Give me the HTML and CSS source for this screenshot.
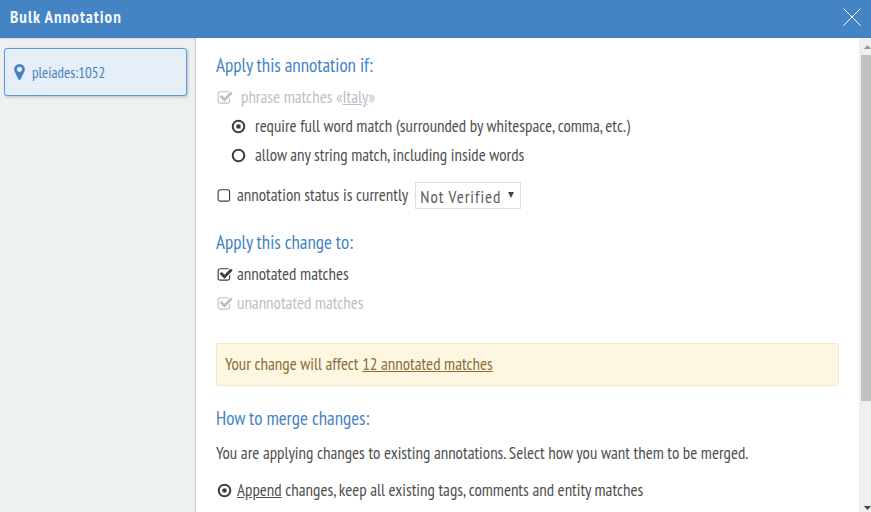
FILE: index.html
```html
<!DOCTYPE html>
<html lang="en">
<head>
<meta charset="utf-8">
<title>Bulk Annotation</title>
<link rel="stylesheet" href="styles.css">
</head>
<body>
<svg class="sprite" aria-hidden="true">
  <symbol id="checked" viewBox="0 0 1792 1792"><path d="M1472 930v318q0 119-84.5 203.5t-203.5 84.5h-832q-119 0-203.5-84.5t-84.5-203.5v-832q0-119 84.5-203.5t203.5-84.5h832q63 0 117 25 15 7 18 23 3 17-9 29l-49 49q-10 10-23 10-3 0-9-2-23-6-45-6h-832q-66 0-113 47t-47 113v832q0 66 47 113t113 47h832q66 0 113-47t47-113v-254q0-13 9-22l64-64q10-10 23-10 6 0 12 3 20 8 20 29zm231-489l-814 814q-24 24-57 24t-57-24l-430-430q-24-24-24-57t24-57l110-110q24-24 57-24t57 24l263 263 647-647q24-24 57-24t57 24l110 110q24 24 24 57t-24 57z"/></symbol>
  <symbol id="unchecked" viewBox="128 0 1792 1792"><path d="M1312 256h-832q-66 0-113 47t-47 113v832q0 66 47 113t113 47h832q66 0 113-47t47-113v-832q0-66-47-113t-113-47zm288 160v832q0 119-84.5 203.5t-203.5 84.5h-832q-119 0-203.5-84.5t-84.5-203.5v-832q0-119 84.5-203.5t203.5-84.5h832q119 0 203.5 84.5t84.5 203.5z"/></symbol>
  <symbol id="radio-off" viewBox="0 0 16 16"><circle cx="7.5" cy="7.5" r="5.8" fill="none" stroke="currentColor" stroke-width="2"/></symbol>
  <symbol id="radio-on" viewBox="0 0 16 16"><circle cx="7.5" cy="7.5" r="5.8" fill="none" stroke="currentColor" stroke-width="2"/><circle cx="7.5" cy="7.5" r="2.3"/></symbol>
</svg>

<div class="modal">
  <header class="titlebar">
    <h1>Bulk Annotation</h1>
    <button class="close" type="button" aria-label="Close">
      <svg viewBox="0 0 18 18"><path d="M.5.5l17 17M17.5.5l-17 17"/></svg>
    </button>
  </header>

  <aside class="sidebar">
    <div class="entity">
      <svg class="pin" viewBox="384 128 1024 1536" aria-hidden="true"><path d="M1152 640q0-106-75-181t-181-75-181 75-75 181 75 181 181 75 181-75 75-181zm256 0q0 109-33 179l-364 774q-16 33-47.5 52t-67.5 19-67.5-19-46.5-52l-365-774q-33-70-33-179 0-212 150-362t362-150 362 150 150 362z"/></svg>
      <span>pleiades:1052</span>
    </div>
  </aside>

  <main class="content">
    <section>
      <h2>Apply this annotation if:</h2>
      <label class="option disabled spaced"><span class="mark"><input type="checkbox" checked disabled><svg><use href="#checked"/></svg></span><span>phrase matches «<u>Italy</u>»</span></label>
      <div class="nested">
        <label class="option spaced"><span class="mark"><input type="radio" name="match" checked><svg><use href="#radio-on"/></svg></span><span>require full word match (surrounded by whitespace, comma, etc.)</span></label>
        <label class="option spaced"><span class="mark"><input type="radio" name="match"><svg><use href="#radio-off"/></svg></span><span>allow any string match, including inside words</span></label>
      </div>
      <div class="status">
        <label class="option"><span class="mark"><input type="checkbox"><svg><use href="#unchecked"/></svg></span><span>annotation status is currently</span></label>
        <span class="picker">
          <select aria-label="Annotation status"><option>Not Verified</option></select>
          <svg viewBox="0 0 6 6" aria-hidden="true"><path d="M0 0h6L3 6z"/></svg>
        </span>
      </div>
    </section>

    <section>
      <h2>Apply this change to:</h2>
      <label class="option"><span class="mark"><input type="checkbox" checked><svg><use href="#checked"/></svg></span><span>annotated matches</span></label>
      <label class="option disabled"><span class="mark"><input type="checkbox" checked disabled><svg><use href="#checked"/></svg></span><span>unannotated matches</span></label>
    </section>

    <p class="notice">Your change will affect <u>12 annotated matches</u></p>

    <section>
      <h2>How to merge changes:</h2>
      <p class="hint">You are applying changes to existing annotations. Select how you want them to be merged.</p>
      <label class="option"><span class="mark"><input type="radio" name="merge" checked><svg><use href="#radio-on"/></svg></span><span><u>Append</u> changes, keep all existing tags, comments and entity matches</span></label>
    </section>
  </main>

  <div class="scrollbar" aria-hidden="true">
    <svg class="arrow up" viewBox="0 0 9 5"><path d="M0 5L4.500 0 9 5z"/></svg>
    <div class="track"><div class="thumb"></div></div>
    <svg class="arrow down" viewBox="0 0 9 5"><path d="M0 0h9L4.500 5z"/></svg>
  </div>
</div>
</body>
</html>
```
FILE: styles.css
```css
* { box-sizing: border-box; }

body {
  margin: 0;
  color: #505050;
  background: #fff;
  font: 17px/29px "PT Sans Narrow", "Liberation Sans Narrow", "Roboto Condensed", sans-serif;
}

h1, h2, p { margin: 0; font-weight: normal; }

.sprite { display: none; }

.modal {
  display: grid;
  grid-template: auto minmax(0, 1fr) / 196px minmax(0, 1fr) 12px;
  height: 100vh;
  overflow: hidden;
}

.titlebar {
  grid-column: 1 / -1;
  display: flex;
  align-items: center;
  justify-content: space-between;
  height: 38px;
  padding: 0 10px;
  padding-bottom: 4px;
  color: #f4f8fc;
  background: #4483c4;
}

.titlebar h1 {
  font-size: 17px;
  font-weight: bold;
  letter-spacing: 1px;
}

.close {
  display: flex;
  padding: 0;
  border: 0;
  background: none;
}

.close svg {
  width: 18px;
  height: 18px;
  fill: none;
  stroke: #fff;
}

.sidebar {
  padding: 10px 9px 10px 4px;
  background: #edf1f2;
  box-shadow: inset -2px 0 2px -1px #c4c8ca, inset 0 2px 2px -1px #d4d8da;
}

.entity {
  display: flex;
  align-items: center;
  gap: 7px;
  height: 48px;
  padding: 0 9px;
  color: #4483c4;
  background: #e6eef7;
  border: 1px solid #5f9cdb;
  border-radius: 3px;
  box-shadow: 1px 1px 3px #bbb;
  font-size: 15px;
}

.pin {
  width: 11px;
  height: 16px;
  fill: currentColor;
}

.content {
  padding: 13px 20px 0;
  overflow: hidden;
  white-space: nowrap;
}

h2 {
  margin-bottom: 3px;
  color: #4483c4;
  font-size: 19px;
}

section + section { margin-top: 18px; }

.option {
  display: flex;
  align-items: center;
  gap: 4px;
}

.spaced { gap: 8px; }
.nested { padding-left: 14px; }

.disabled { color: #bbbfca; }

.mark {
  position: relative;
  display: flex;
  width: 17px;
  height: 16px;
  padding-left: 1px;
}

.mark input {
  position: absolute;
  inset: 0;
  width: 100%;
  height: 100%;
  margin: 0;
  opacity: 0;
}

.mark svg {
  width: 16px;
  height: 16px;
  flex: none;
  fill: currentColor;
}

.option:not(.disabled) .mark { color: #3c3c3c; }

.status {
  display: flex;
  align-items: center;
  gap: 7px;
  margin-top: 11px;
}

.picker {
  position: relative;
  display: flex;
}

.picker select {
  width: 106px;
  height: 27px;
  padding: 0 4px 3px;
  color: #5c5c5c;
  background: #fff;
  border: 1px solid #ddd;
  border-radius: 0;
  appearance: none;
  font: inherit;
  letter-spacing: 1px;
}

.picker svg {
  position: absolute;
  right: 7px;
  top: 10px;
  width: 6px;
  height: 6px;
  fill: #444;
  pointer-events: none;
}

.notice {
  margin: 25px 0 18px;
  padding: 6px 8px;
  color: #8a6d3b;
  background: #fdf7e2;
  border: 1px solid #f7e8c0;
  border-radius: 2px;
}

.hint { margin: 6px 0 8px; }

.scrollbar {
  display: flex;
  flex-direction: column;
  padding: 7px 0 2px;
  overflow: hidden;
  background: #f0f0f0;
}

.arrow {
  width: 9px;
  height: 4px;
  margin-left: 4px;
  flex: none;
  fill: #999;
}

.down { fill: #444; }

.track {
  flex: 1;
  margin: 6px 0 13px 2px;
}

.thumb {
  height: 79%;
  background: #c1c1c1;
}
```
